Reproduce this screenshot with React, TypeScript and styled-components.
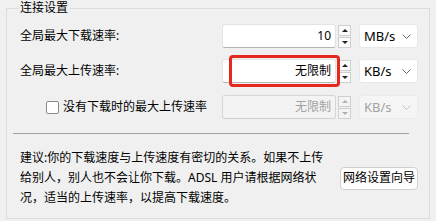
import styled, { createGlobalStyle } from "styled-components";

const GlobalStyle = createGlobalStyle`
  html, body {
    margin: 0;
    padding: 0;
    background: #f0f0f0;
  }
  body {
    font-family: "Noto Sans", "Noto Sans CJK SC", sans-serif;
    font-size: 12px;
    color: #000;
  }
`;

const Page = styled.div`
  width: 436px;
  height: 221px;
  box-sizing: border-box;
  padding: 0 6px 0 6px;
  overflow: hidden;
`;

const GroupBox = styled.fieldset`
  margin: 0;
  padding: 8px 11px 0 13px;
  height: 219px;
  box-sizing: border-box;
  border: 1px solid #dcdcdc;
  border-radius: 0;
`;

const Legend = styled.legend`
  padding: 0 2px 0 1px;
  margin-left: -1px;
  font-size: 12px;
  line-height: 16px;
  color: #000;
`;

const Row = styled.div<{ $gap: number }>`
  display: flex;
  align-items: center;
  height: 24px;
  margin-top: ${(p) => p.$gap}px;
  position: relative;
`;

const Label = styled.div<{ $indent?: number }>`
  flex: 1;
  display: flex;
  align-items: center;
  padding-left: ${(p) => p.$indent ?? 0}px;
  line-height: 16px;
  white-space: nowrap;
`;

const Check = styled.span`
  width: 11px;
  height: 11px;
  border: 1px solid #8a8a8a;
  border-radius: 2px;
  background: #fff;
  margin-right: 4px;
  flex-shrink: 0;
`;

const TextBox = styled.div<{ $disabled?: boolean }>`
  width: 114px;
  height: 24px;
  box-sizing: border-box;
  display: flex;
  align-items: center;
  justify-content: flex-end;
  padding-right: 4px;
  background: ${(p) => (p.$disabled ? "#f3f3f3" : "#fff")};
  border: 1px solid ${(p) => (p.$disabled ? "#d6d6d6" : "#e3e3e3")};
  border-bottom-color: ${(p) => (p.$disabled ? "#cfcfcf" : "#b5b5b5")};
  border-radius: 3px;
  color: ${(p) => (p.$disabled ? "#a3a3a3" : "#000")};
  line-height: 16px;
`;

const Spinner = styled.div`
  display: flex;
  flex-direction: column;
  gap: 1px;
  margin-left: 2px;
  height: 23px;
`;

const SpinButton = styled.div<{ $disabled?: boolean }>`
  width: 13px;
  height: 11px;
  box-sizing: border-box;
  border: 1px solid #cfcfcf;
  background: ${(p) => (p.$disabled ? "#f4f4f4" : "#fbfbfb")};
  display: flex;
  align-items: center;
  justify-content: center;
`;

const Arrow = styled.span<{ $down?: boolean; $disabled?: boolean }>`
  width: 0;
  height: 0;
  border-left: 3px solid transparent;
  border-right: 3px solid transparent;
  ${(p) =>
    p.$down
      ? `border-top: 3px solid ${p.$disabled ? "#b0b0b0" : "#222"};`
      : `border-bottom: 3px solid ${p.$disabled ? "#b0b0b0" : "#222"};`}
`;

const Combo = styled.div<{ $disabled?: boolean }>`
  width: 59px;
  height: 24px;
  box-sizing: border-box;
  margin-left: 8px;
  display: flex;
  align-items: center;
  justify-content: space-between;
  padding: 0 6px 0 4px;
  background: ${(p) => (p.$disabled ? "#f5f5f5" : "#fff")};
  border: 1px solid ${(p) => (p.$disabled ? "#ececec" : "#e8e8e8")};
  border-radius: 3px;
  color: ${(p) => (p.$disabled ? "#a3a3a3" : "#000")};
  font-size: 13px;
  line-height: 16px;
`;

const Highlight = styled.div`
  position: absolute;
  left: 209px;
  top: -4px;
  width: 111px;
  height: 32px;
  box-sizing: border-box;
  border: 3px solid #e42a1f;
  border-radius: 4px;
  pointer-events: none;
`;

const Separator = styled.div`
  height: 1px;
  background: #a0a0a0;
  margin: 14px 9px 0 -7px;
`;

const Footer = styled.div`
  display: flex;
  align-items: center;
  justify-content: space-between;
  margin-top: 14px;
`;

const Advice = styled.p`
  margin: 0;
  width: 306px;
  line-height: 20px;
`;

const WizardButton = styled.button`
  font: inherit;
  font-size: 12px;
  line-height: 16px;
  color: #000;
  height: 23px;
  padding: 0 2px;
  background: #fdfdfd;
  border: 1px solid #d0d0d0;
  border-radius: 4px;
`;

function Chevron({ disabled }: { disabled?: boolean }) {
  return (
    <svg width="9" height="5" viewBox="0 0 9 5">
      <path
        d="M0.5 0.5 L4.5 4.5 L8.5 0.5"
        fill="none"
        stroke={disabled ? "#c4c4c4" : "#6a6a6a"}
        strokeWidth="1"
      />
    </svg>
  );
}

function Spin({ disabled }: { disabled?: boolean }) {
  return (
    <Spinner>
      <SpinButton $disabled={disabled}>
        <Arrow $disabled={disabled} />
      </SpinButton>
      <SpinButton $disabled={disabled}>
        <Arrow $down $disabled={disabled} />
      </SpinButton>
    </Spinner>
  );
}

export default function App() {
  return (
    <Page>
      <GlobalStyle />
      <GroupBox>
        <Legend>连接设置</Legend>
        <Row $gap={0}>
          <Label>全局最大下载速率:</Label>
          <TextBox>10</TextBox>
          <Spin />
          <Combo>
            MB/s
            <Chevron />
          </Combo>
        </Row>
        <Row $gap={11}>
          <Label>全局最大上传速率:</Label>
          <TextBox>无限制</TextBox>
          <Spin />
          <Combo>
            KB/s
            <Chevron />
          </Combo>
          <Highlight />
        </Row>
        <Row $gap={12}>
          <Label $indent={26}>
            <Check />
            没有下载时的最大上传速率
          </Label>
          <TextBox $disabled>无限制</TextBox>
          <Spin disabled />
          <Combo $disabled>
            KB/s
            <Chevron disabled />
          </Combo>
        </Row>
        <Separator />
        <Footer>
          <Advice>
            建议:你的下载速度与上传速度有密切的关系。如果不上传给别人，别人也不会让你下载。ADSL
            用户请根据网络状况，适当的上传速率，以提高下载速度。
          </Advice>
          <WizardButton>网络设置向导</WizardButton>
        </Footer>
      </GroupBox>
    </Page>
  );
}
